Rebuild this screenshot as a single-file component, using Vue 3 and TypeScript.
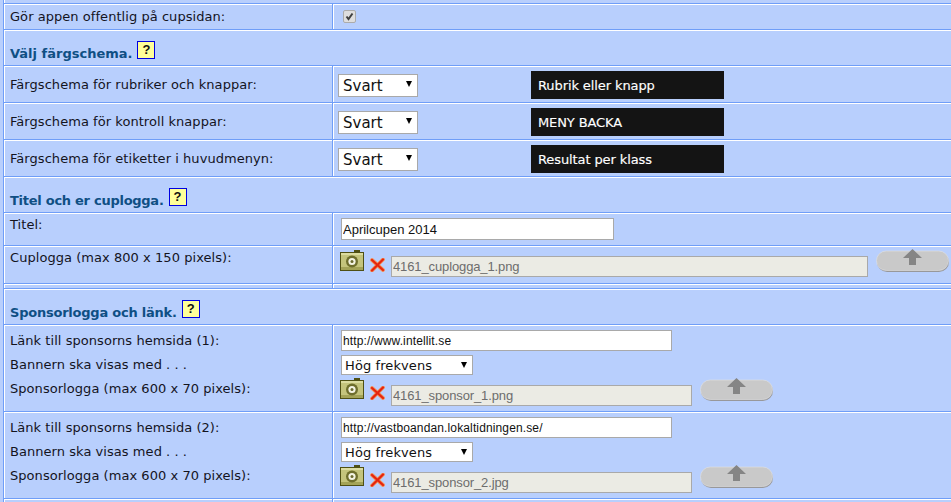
<script setup lang="ts">
interface Scheme { label: string; sample: string }
interface Sponsor { n: number; url: string; file: string }
const schemes: Scheme[] = [
  { label: 'Färgschema för rubriker och knappar:', sample: 'Rubrik eller knapp' },
  { label: 'Färgschema för kontroll knappar:', sample: 'MENY BACKA' },
  { label: 'Färgschema för etiketter i huvudmenyn:', sample: 'Resultat per klass' },
]
const sponsors: Sponsor[] = [
  { n: 1, url: 'http://www.intellit.se', file: '4161_sponsor_1.png' },
  { n: 2, url: 'http://vastboandan.lokaltidningen.se/', file: '4161_sponsor_2.jpg' },
]
</script>

<template>
  <div class="page">
    <div class="table">
      <div class="row r-public">
        <div class="label">Gör appen offentlig på cupsidan:</div>
        <div class="value"><input class="check" type="checkbox" checked disabled /></div>
      </div>

      <div class="head">
        <span class="head-text">Välj färgschema.</span><span class="help">?</span>
      </div>

      <div v-for="s in schemes" :key="s.label" class="row r-scheme">
        <div class="label">{{ s.label }}</div>
        <div class="value scheme-value">
          <span class="sel sel-small"><select class="sel-input"><option>Svart</option></select></span>
          <div class="swatch">{{ s.sample }}</div>
        </div>
      </div>

      <div class="head">
        <span class="head-text tight">Titel och er cuplogga.</span><span class="help">?</span>
      </div>

      <div class="row r-title">
        <div class="label top">Titel:</div>
        <div class="value title-value"><input class="text title-input" type="text" value="Aprilcupen 2014" /></div>
      </div>

      <div class="row r-logo">
        <div class="label top">Cuplogga (max 800 x 150 pixels):</div>
        <div class="value file-row">
          <svg class="cam" width="25" height="22" viewBox="0 0 25 22"><path d="M0 2h14V0h6v2h4v19H0z" fill="#4f5014"/><rect x="1" y="3" width="22" height="17" fill="#c4c47c"/><rect x="1" y="3" width="22" height="2" fill="#dcdca0"/><rect x="1" y="17" width="22" height="3" fill="#a3a357"/><circle cx="12" cy="11.500" r="6" fill="#6e6e2c"/><circle cx="12" cy="11.500" r="3.600" fill="#f4f4e4"/><circle cx="12" cy="11.500" r="1.500" fill="#6a6a30"/></svg>
          <svg class="del" width="15" height="14" viewBox="0 0 15 14"><path d="M2 2l11 10M13 1.500L2 12.500" stroke="#f2925a" stroke-width="3.800" stroke-linecap="round"/><path d="M2 2l11 10M13 1.500L2 12.500" stroke="#e5240f" stroke-width="2.200" stroke-linecap="round"/></svg>
          <input class="file file-wide" type="text" value="4161_cuplogga_1.png" disabled />
          <button class="up" type="button" aria-label="Ladda upp">
            <svg width="74" height="24" viewBox="0 0 74 24"><rect x="1" y="3" width="72" height="20" rx="10" fill="#98989a"/><rect x="0.500" y="2" width="72" height="19.500" rx="9.700" fill="#c9c9c9" stroke="#e2e2e2" stroke-width="0.600"/><path d="M36.500 0L46 9h-6v7h-7V9h-6z" fill="#858585"/></svg>
          </button>
        </div>
      </div>

      <div class="row r-thin"><div class="label"></div><div class="value"></div></div>

      <div class="head">
        <span class="head-text tighter">Sponsorlogga och länk.</span><span class="help">?</span>
      </div>

      <div v-for="s in sponsors" :key="s.n" class="row r-sponsor">
        <div class="label stack">
          <div>Länk till sponsorns hemsida ({{ s.n }}):</div>
          <div>Bannern ska visas med . . .</div>
          <div>Sponsorlogga (max 600 x 70 pixels):</div>
        </div>
        <div class="value sponsor-value">
          <input class="text url-input" type="text" :value="s.url" />
          <span class="sel sel-wide"><select class="sel-input"><option>Hög frekvens</option></select></span>
          <div class="file-row compact">
            <svg class="cam" width="25" height="22" viewBox="0 0 25 22"><path d="M0 2h14V0h6v2h4v19H0z" fill="#4f5014"/><rect x="1" y="3" width="22" height="17" fill="#c4c47c"/><rect x="1" y="3" width="22" height="2" fill="#dcdca0"/><rect x="1" y="17" width="22" height="3" fill="#a3a357"/><circle cx="12" cy="11.500" r="6" fill="#6e6e2c"/><circle cx="12" cy="11.500" r="3.600" fill="#f4f4e4"/><circle cx="12" cy="11.500" r="1.500" fill="#6a6a30"/></svg>
            <svg class="del" width="15" height="14" viewBox="0 0 15 14"><path d="M2 2l11 10M13 1.500L2 12.500" stroke="#f2925a" stroke-width="3.800" stroke-linecap="round"/><path d="M2 2l11 10M13 1.500L2 12.500" stroke="#e5240f" stroke-width="2.200" stroke-linecap="round"/></svg>
            <input class="file file-narrow" type="text" :value="s.file" disabled />
            <button class="up" type="button" aria-label="Ladda upp">
              <svg width="74" height="24" viewBox="0 0 74 24"><rect x="1" y="3" width="72" height="20" rx="10" fill="#98989a"/><rect x="0.500" y="2" width="72" height="19.500" rx="9.700" fill="#c9c9c9" stroke="#e2e2e2" stroke-width="0.600"/><path d="M36.500 0L46 9h-6v7h-7V9h-6z" fill="#858585"/></svg>
            </button>
          </div>
        </div>
      </div>

      <div class="row r-rest"><div class="label"></div><div class="value"></div></div>
    </div>
  </div>
</template>

<style scoped>
.page {
  width: 951px;
  height: 502px;
  overflow: hidden;
  background: #b8cffd;
  padding-left: 3px;
  box-sizing: border-box;
  font-family: "DejaVu Sans", Verdana, sans-serif;
  font-size: 13px;
  color: #14141e;
}
.table {
  height: 502px;
  padding-top: 3px;
  box-sizing: border-box;
  border-left: 1px solid #6f9ef8;
  box-shadow: inset 1px 0 0 #fff;
}
.row {
  display: grid;
  grid-template-columns: 329px 1fr;
  box-sizing: border-box;
  border-top: 1px solid #6f9ef8;
  box-shadow: inset 0 1px 0 #fff;
}
.r-public { height: 26px; }
.r-scheme { height: 37px; }
.r-title { height: 33px; }
.r-logo { height: 38px; }
.r-thin { height: 5px; }
.r-sponsor { height: 87px; }
.r-rest { height: 4px; }
.label {
  border-right: 1px solid #6f9ef8;
  padding: 1px 6px 0;
  display: flex;
  align-items: center;
  line-height: 16px;
  letter-spacing: 0.05px;
  box-sizing: border-box;
  white-space: nowrap;
  min-width: 0;
}
.label.top { align-items: flex-start; padding-top: 4px; }
.value {
  box-shadow: inset 1px 0 0 #fff, inset 0 1px 0 #fff;
  min-width: 0;
}
.r-public .label { padding-top: 0; }
.r-public .value { display: flex; align-items: center; padding-left: 10px; }
.check {
  appearance: none;
  width: 13px;
  height: 13px;
  margin: 0;
  box-sizing: border-box;
  border: 1px solid #ababab;
  border-radius: 2px;
  background: #dedede url("data:image/svg+xml,%3Csvg xmlns='http://www.w3.org/2000/svg' width='11' height='11'%3E%3Cpath d='M2.500 5.500l2 2.500 4-5.500' fill='none' stroke='%23404040' stroke-width='2'/%3E%3C/svg%3E") center no-repeat;
}
.head {
  height: 36px;
  border-top: 1px solid #6f9ef8;
  box-shadow: inset 0 1px 0 #fff;
  box-sizing: border-box;
  display: flex;
  align-items: flex-end;
  padding: 0 0 3px 6px;
  gap: 5px;
}
.head-text {
  font-weight: 700;
  color: #0f4f84;
  font-size: 13px;
  line-height: 16px;
}
.tight { letter-spacing: -0.27px; }
.tighter { letter-spacing: -0.23px; }
.help {
  width: 18px;
  height: 18px;
  box-sizing: border-box;
  border: 1px solid #0000e0;
  background: #ffff99;
  color: #111;
  font-family: "Liberation Sans", Arial, sans-serif;
  font-weight: 700;
  font-size: 13px;
  line-height: 16px;
  text-align: center;
  margin-bottom: 3px;
}
.scheme-value { display: flex; align-items: center; padding: 2px 0 0 5px; box-sizing: border-box; }
.sel { position: relative; display: block; }
.sel::after {
  content: "";
  position: absolute;
  top: 7px;
  right: 6px;
  border: 3.5px solid transparent;
  border-top: 6px solid #000;
  border-bottom: 0;
}
.sel-input {
  appearance: none;
  display: block;
  width: 100%;
  height: 100%;
  box-sizing: border-box;
  border: 1px solid #a9a9a9;
  border-radius: 0;
  background: #fff;
  color: #111;
  font-family: "DejaVu Sans", Verdana, sans-serif;
  padding: 0 3px;
  margin: 0;
}
.sel-small { width: 80px; height: 23px; }
.sel-small .sel-input { font-size: 15px; padding: 2px 4px 0; }
.sel-wide { width: 132px; height: 20px; }
.sel-wide .sel-input { font-size: 13px; letter-spacing: 0.1px; }
.swatch {
  margin-left: 113px;
  width: 193px;
  height: 28px;
  background: #141414;
  color: #fff;
  font-size: 13px;
  letter-spacing: -0.1px;
  line-height: 30px;
  padding-left: 7px;
  box-sizing: border-box;
  overflow: hidden;
  -webkit-text-stroke: 0.15px #fff;
}
.text, .file {
  box-sizing: border-box;
  font-family: "Liberation Sans", Arial, sans-serif;
  font-size: 12px;
  margin: 0;
  padding: 0 1px;
  border: 1px solid #a9a9a9;
  border-radius: 0;
  display: block;
}
.text { background: #fff; color: #111; letter-spacing: 0.13px; }
.file { background: #ebebe4; color: #6d6d6d; height: 21px; font-size: 13px; letter-spacing: -0.12px; }
.title-value { padding: 5px 0 0 8px; }
.title-input { width: 273px; height: 22px; font-size: 13px; letter-spacing: 0; }
.file-row {
  display: flex;
  align-items: flex-start;
  padding: 4px 0 0 7px;
}
.compact { padding: 0; margin-left: -1px; }
.cam { flex: none; display: block; }
.del { flex: none; display: block; margin: 8px 0 0 5px; }
.file-wide { width: 477px; margin: 6px 0 0 6px; }
.file-narrow { width: 301px; margin: 7px 0 0 6px; }
.up {
  border: 0;
  background: transparent;
  padding: 0;
  margin: 0 0 0 8px;
  width: 74px;
  height: 24px;
  flex: none;
}
.up svg { display: block; }
.r-logo .up { margin-top: -1px; }
.sponsor-value {
  display: flex;
  flex-direction: column;
  align-items: flex-start;
  padding: 5px 0 0 8px;
}
.url-input { width: 331px; height: 21px; }
.sponsor-value .sel { margin-top: 4px; }
.sponsor-value .file-row { margin-top: 3px; }
.stack {
  flex-direction: column;
  align-items: flex-start;
  justify-content: flex-start;
  padding-top: 8px;
  gap: 8px;
}
</style>
